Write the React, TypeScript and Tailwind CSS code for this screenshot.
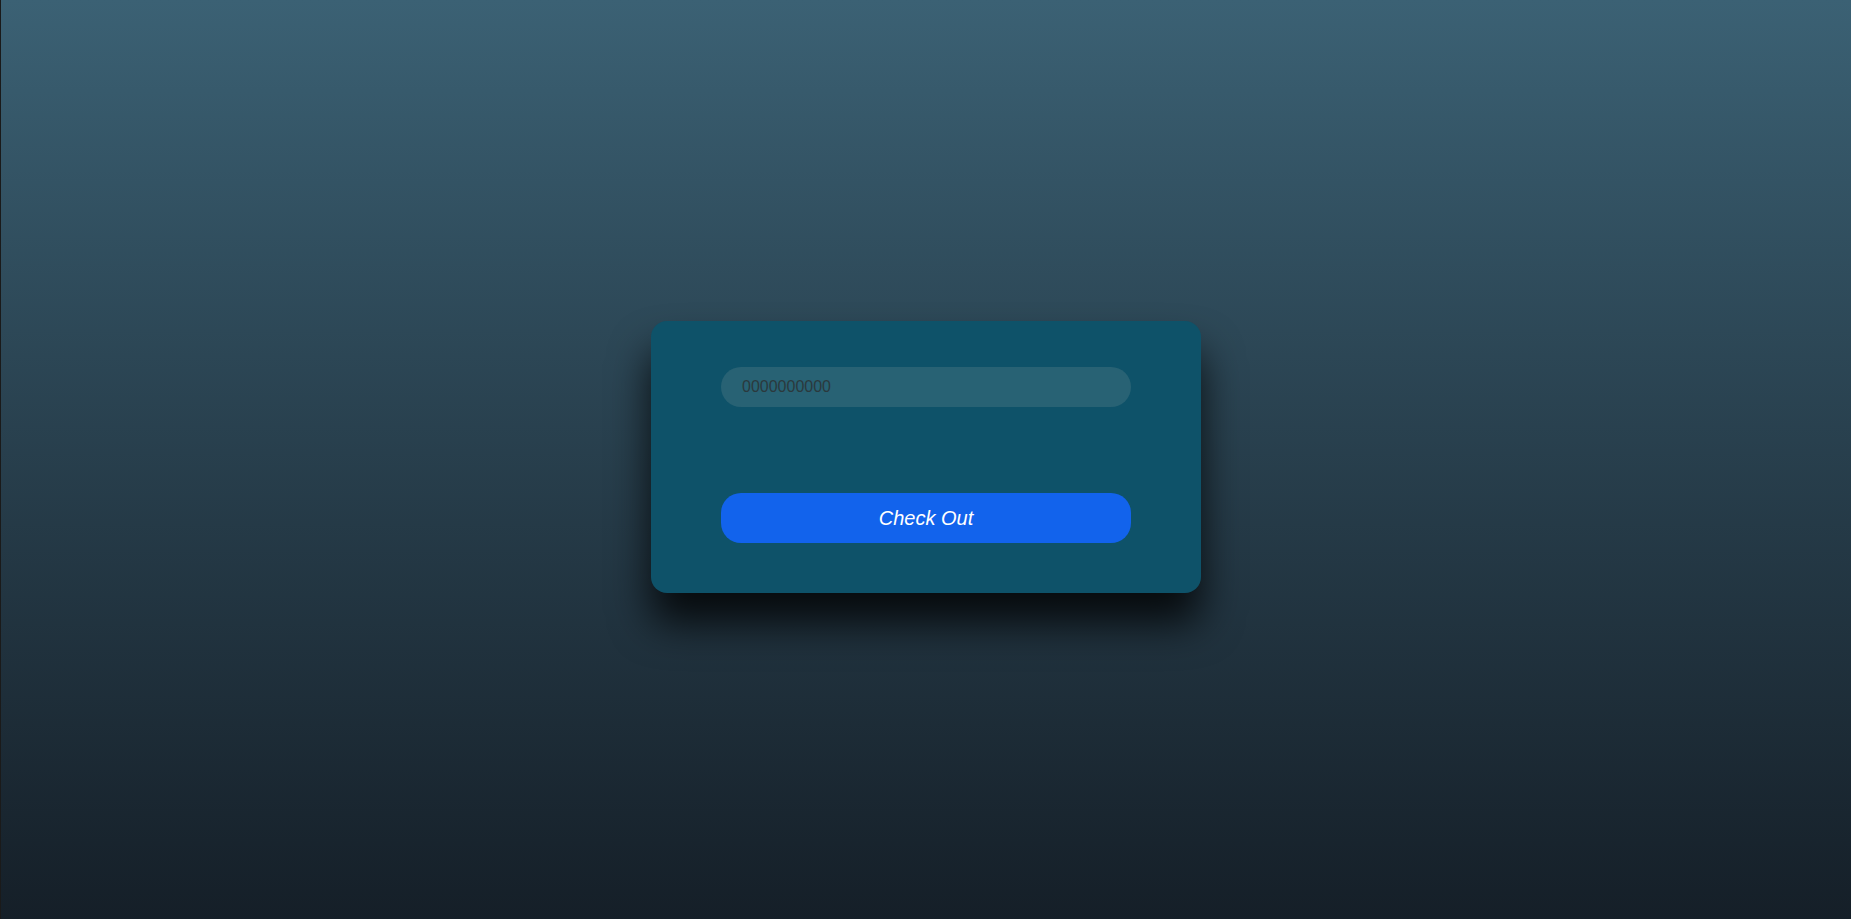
import React from "react";

export default function App() {
  return (
    <div className="w-full h-[919px] flex items-center justify-center bg-gradient-to-b from-[#3b6174] to-[#151f28] border-l border-[#1a1a1a]" style={{ fontFamily: '"Liberation Sans", Arial, sans-serif' }}>
      <div className="w-[550px] h-[272px] bg-[#0e5269] rounded-[16px] shadow-[0_30px_40px_rgba(0,0,0,0.8)] px-[70px] pt-[46px] pb-[50px] flex flex-col justify-between -mt-[6px]">
        <input
          placeholder="0000000000"
          className="h-[40px] w-full rounded-full bg-[#286274] px-[21px] text-[16px] text-[#2b393d] placeholder:text-[#2b393d] outline-none"
        />
        <button className="h-[50px] w-full rounded-[20px] bg-[#1263ec] text-white text-[20px] italic">
          Check Out
        </button>
      </div>
    </div>
  );
}
